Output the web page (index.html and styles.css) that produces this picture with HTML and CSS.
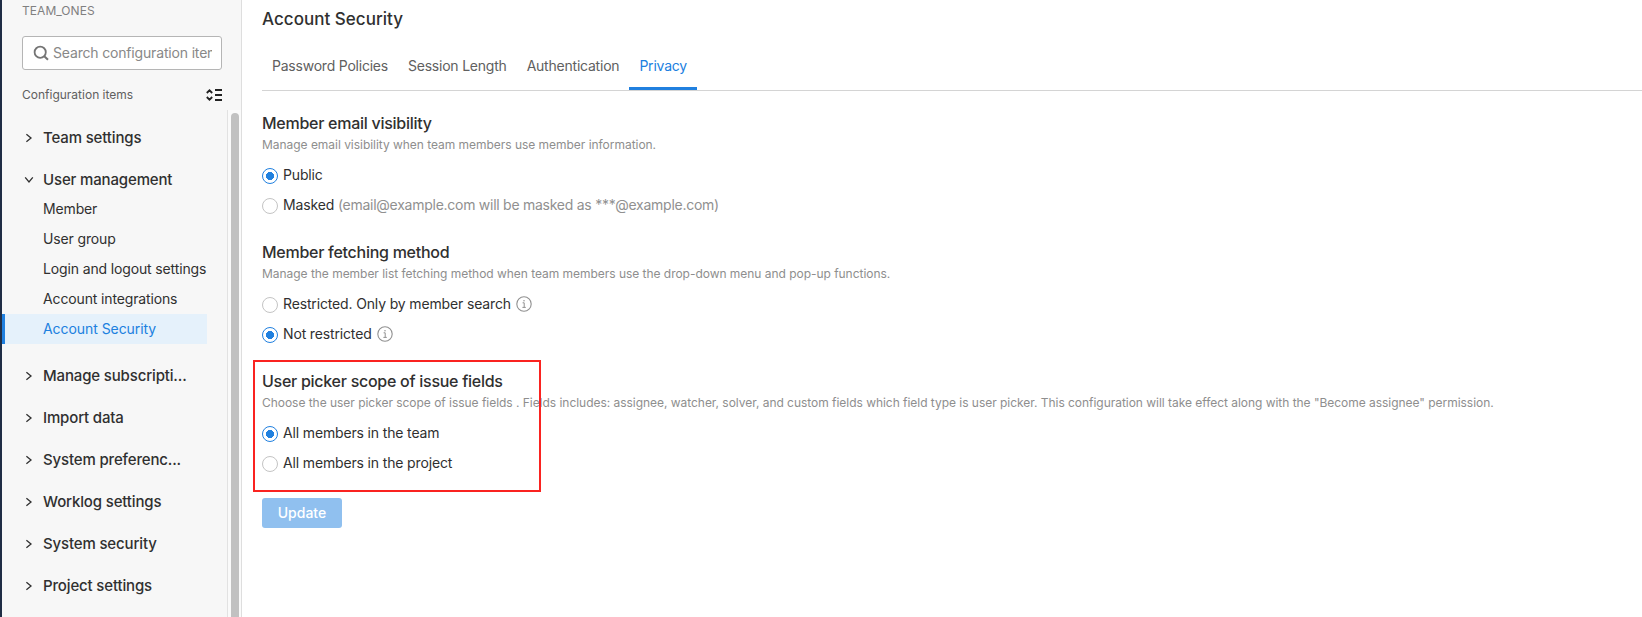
FILE: index.html
```html
<!DOCTYPE html>
<html lang="en">
<head>
<meta charset="utf-8">
<title>Account Security</title>
<link rel="stylesheet" href="styles.css">
</head>
<body>
<svg class="defs" width="0" height="0">
  <symbol id="right" viewBox="0 0 10 10"><path d="M2.4 1.2 7 5 2.4 8.8" fill="none" stroke="currentColor" stroke-width="1.3"/></symbol>
  <symbol id="down" viewBox="0 0 10 10"><path d="M1.2 2.4 5 7 8.8 2.4" fill="none" stroke="currentColor" stroke-width="1.3"/></symbol>
  <symbol id="info" viewBox="0 0 16 16"><circle cx="8" cy="8" r="7.2" fill="none" stroke="currentColor" stroke-width="1.1"/><path d="M6.6 6.8H8.2V11.3M6.4 11.4H9.8" fill="none" stroke="currentColor"/><circle cx="8" cy="4.8" r=".75" fill="currentColor"/></symbol>
</svg>
<div class="app">
  <aside class="sidebar">
    <div class="team">TEAM_ONES</div>
    <div class="search">
      <svg class="search-icon" viewBox="0 0 16 16"><circle cx="7.2" cy="7.2" r="5.6" fill="none" stroke="currentColor" stroke-width="1.8"/><path d="m11 11 4 3.8" stroke="currentColor" stroke-width="2"/></svg>
      <span class="placeholder">Search configuration items</span>
    </div>
    <div class="config"><span>Configuration items</span>
      <svg class="collapse" viewBox="0 0 16 12"><path d="M.8 4 3.5 1.3 6.2 4M.8 8l2.7 2.7L6.2 8M9 1h7M9 6h7M9 11h7" fill="none" stroke="currentColor" stroke-width="1.8"/></svg>
    </div>
    <div class="scroller">
      <nav class="menu">
        <div class="group"><svg class="arrow"><use href="#right"/></svg><span>Team settings</span></div>
        <div class="group"><svg class="arrow"><use href="#down"/></svg><span>User management</span></div>
        <div class="sub">
          <a class="item">Member</a>
          <a class="item">User group</a>
          <a class="item">Login and logout settings</a>
          <a class="item">Account integrations</a>
          <a class="item active">Account Security</a>
        </div>
        <div class="group"><svg class="arrow"><use href="#right"/></svg><span>Manage subscripti...</span></div>
        <div class="group"><svg class="arrow"><use href="#right"/></svg><span>Import data</span></div>
        <div class="group"><svg class="arrow"><use href="#right"/></svg><span>System preferenc...</span></div>
        <div class="group"><svg class="arrow"><use href="#right"/></svg><span>Worklog settings</span></div>
        <div class="group"><svg class="arrow"><use href="#right"/></svg><span>System security</span></div>
        <div class="group"><svg class="arrow"><use href="#right"/></svg><span>Project settings</span></div>
      </nav>
      <div class="track"><div class="thumb"></div></div>
    </div>
  </aside>
  <main class="main">
    <h1 class="title">Account Security</h1>
    <div class="tabs">
      <a class="tab">Password Policies</a>
      <a class="tab">Session Length</a>
      <a class="tab">Authentication</a>
      <a class="tab selected">Privacy</a>
    </div>
    <section class="section">
      <h2 class="heading">Member email visibility</h2>
      <p class="desc">Manage email visibility when team members use member information.</p>
      <label class="option"><span class="radio checked"></span><span>Public</span></label>
      <label class="option"><span class="radio"></span><span>Masked <span class="hint">(email@example.com will be masked as ***@example.com)</span></span></label>
    </section>
    <section class="section">
      <h2 class="heading">Member fetching method</h2>
      <p class="desc">Manage the member list fetching method when team members use the drop-down menu and pop-up functions.</p>
      <label class="option"><span class="radio"></span><span>Restricted. Only by member search</span><svg class="info"><use href="#info"/></svg></label>
      <label class="option"><span class="radio checked"></span><span>Not restricted</span><svg class="info"><use href="#info"/></svg></label>
    </section>
    <section class="section marked">
      <h2 class="heading">User picker scope of issue fields</h2>
      <p class="desc">Choose the user picker scope of issue fields . Fields includes: assignee, watcher, solver, and custom fields which field type is user picker. This configuration will take effect along with the "Become assignee" permission.</p>
      <label class="option"><span class="radio checked"></span><span>All members in the team</span></label>
      <label class="option"><span class="radio"></span><span>All members in the project</span></label>
      <div class="highlight"></div>
    </section>
    <button class="update">Update</button>
  </main>
</div>
</body>
</html>
```
FILE: styles.css
```css
* { box-sizing: border-box; }
body { margin: 0; background: #fff; color: #303030; font: 14px/20px Inter, "Liberation Sans", sans-serif; }
.defs { position: absolute; }
.app { display: flex; height: 617px; overflow: hidden; }
.sidebar { width: 242px; flex: none; display: flex; flex-direction: column; background: #f7f7f7; border-left: 2px solid #1f2d45; border-right: 1px solid #dedede; }
.team { height: 36px; padding: 1px 0 0 20px; font-size: 12px; color: #808080; letter-spacing: .05px; }
.search { width: 200px; height: 34px; flex: none; margin-left: 20px; padding: 0 9px 0 10px; display: flex; align-items: center; gap: 4px; border: 1px solid #b5b5b5; border-radius: 3px; background: #fff; color: #888; }
.search-icon { width: 16px; height: 16px; flex: none; color: #747474; }
.placeholder { overflow: hidden; white-space: nowrap; letter-spacing: -.17px; }
.config { height: 40px; flex: none; padding: 10px 19px 0 20px; display: flex; justify-content: space-between; align-items: center; font-size: 12px; color: #606060; }
.collapse { width: 16px; height: 12px; color: #222; }
.scroller { flex: 1; min-height: 0; display: flex; justify-content: space-between; }
.menu { width: 205px; padding-top: 7px; }
.group { height: 42px; padding-left: 22px; display: flex; align-items: center; gap: 9px; font-size: 15px; font-weight: 500; letter-spacing: -.15px; white-space: nowrap; }
.arrow { width: 10px; height: 10px; flex: none; margin-top: -1px; }
.sub { margin: -7px 0 11px; }
.item { display: block; height: 30px; padding-left: 41px; line-height: 30px; letter-spacing: -.14px; white-space: nowrap; }
.active { padding-left: 38px; border-left: 3px solid #2080df; background: #e5f1fb; color: #2080df; letter-spacing: -.06px; }
.track { width: 14px; padding: 3px 2px 0 3px; border-left: 1px solid #e2e2e2; background: #fafafa; }
.thumb { width: 8px; height: 520px; border-radius: 4px; background: #c1c1c1; }
.main { flex: 1; min-width: 0; padding-left: 20px; }
.title { margin: 0; padding-top: 7px; font-size: 17px; line-height: 24px; font-weight: 500; letter-spacing: .03px; }
.tabs { display: flex; height: 60px; border-bottom: 1px solid #d4d4d4; }
.tab { height: 59px; padding: 25px 10px 0; color: #606060; letter-spacing: -.22px; }
.selected { color: #2080df; border-bottom: 3px solid #2080df; }
.section { height: 129px; }
.tabs + .section { height: 149px; padding-top: 20px; }
.heading { margin: 0; font-size: 16px; line-height: 24px; font-weight: 500; letter-spacing: -.27px; }
.desc { margin: 0 0 5px; font-size: 12px; line-height: 20px; letter-spacing: -.033px; color: #8e8e8e; white-space: nowrap; }
.option { display: flex; align-items: center; height: 30px; gap: 5px; letter-spacing: -.15px; }
.radio { width: 16px; height: 16px; margin-top: 1px; border: 1px solid #c4c4c4; border-radius: 50%; background: #fff; }
.checked { border-color: #2080df; background: radial-gradient(circle, #2080df 3.8px, #fff 4.3px); }
.hint { color: #909090; letter-spacing: -.26px; }
.info { width: 16px; height: 16px; margin-top: -1px; color: #909090; }
.marked { position: relative; }
.highlight { position: absolute; left: -9px; top: -9px; width: 288px; height: 132px; border: 2px solid #fa2320; }
.update { display: block; width: 80px; height: 30px; padding: 0; border: 0; border-radius: 3px; background: #90c0ef; color: #fff; font: 500 14px/30px Inter, sans-serif; }
```
